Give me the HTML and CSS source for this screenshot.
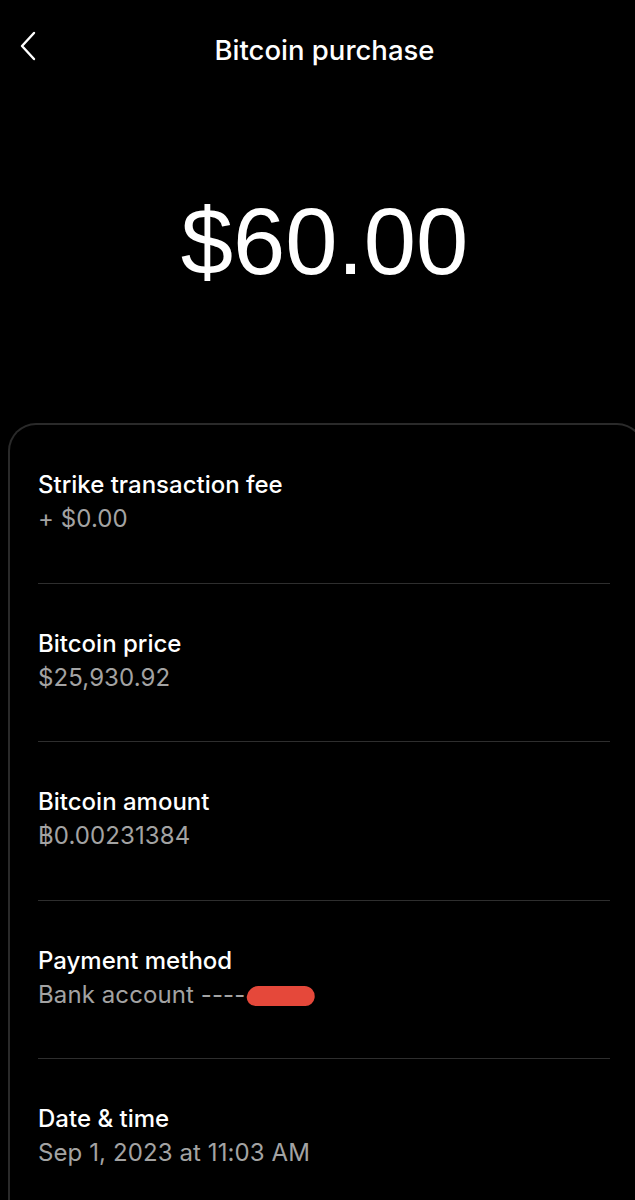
FILE: index.html
```html
<!DOCTYPE html>
<html lang="en-US">
  <head>
    <meta charset="UTF-8">
    <meta name="viewport" content="width=device-width, initial-scale=1">
    <title>Bitcoin purchase</title>
    <link rel="stylesheet" href="styles.css">
  </head>
  <body>
    <div class="screen">
      <!-- Top bar -->
      <header class="topbar">
        <a class="back" href="#" aria-label="Back">
          <svg width="20" height="30" viewBox="0 0 20 30" fill="none">
            <path d="M16 2 L4 15 L16 28" stroke="#fff" stroke-width="2.4" stroke-linecap="round" stroke-linejoin="round"/>
          </svg>
        </a>
        <h1 class="title">Bitcoin purchase</h1>
      </header>

      <div class="amount">$60.00</div>

      <!-- Details card -->
      <section class="card">
        <div class="row">
          <div class="label">Strike transaction fee</div>
          <div class="value">+ $0.00</div>
        </div>
        <div class="row">
          <div class="label">Bitcoin price</div>
          <div class="value">$25,930.92</div>
        </div>
        <div class="row">
          <div class="label">Bitcoin amount</div>
          <div class="value">฿0.00231384</div>
        </div>
        <div class="row">
          <div class="label">Payment method</div>
          <div class="value">Bank account ----<span class="redact"></span></div>
        </div>
        <div class="row">
          <div class="label">Date &amp; time</div>
          <div class="value">Sep 1, 2023 at 11:03 AM</div>
        </div>
      </section>
    </div>
  </body>
</html>
```

FILE: styles.css
```css
/* Page setup */
html, body {
    margin: 0;
    padding: 0;
    background: #000;
    overflow: hidden;
}

body {
    color: #fff;
    font-family: Inter, "Liberation Sans", sans-serif;
}

.screen {
    width: 635px;
    height: 1200px;
    overflow: hidden;
}

/* Header */
.topbar {
    position: relative;
    height: 98px;
    display: flex;
    align-items: center;
    justify-content: center;
}

.back {
    position: absolute;
    left: 18px;
    top: 31px;
    display: block;
    line-height: 0;
}

.title {
    margin: 0;
    padding-left: 14px;
    font-size: 27.5px;
    font-weight: 500;
    letter-spacing: 0;
    transform: translateY(1px);
}

/* Big amount */
.amount {
    text-align: center;
    font-family: "Liberation Sans", Arial, sans-serif;
    font-size: 94px;
    font-weight: 400;
    line-height: 1;
    padding-left: 14px;
    margin-top: 97px;
    height: 228px;
}

/* Card with rows */
.card {
    margin-left: 8px;
    margin-right: -10px;
    border: 2px solid #2a2a2a;
    border-bottom: none;
    border-radius: 28px 28px 0 0;
    padding: 0 30px 0 28px;
}

.row {
    box-sizing: border-box;
    padding-top: 43px;
    height: 158.5px;
    border-bottom: 1.5px solid #2e2e2e;
    width: 572px;
}

.row:last-child {
    border-bottom: none;
}

.label {
    font-size: 24px;
    font-weight: 500;
    line-height: 34px;
    letter-spacing: 0;
}

.value {
    font-size: 24px;
    color: #a3a3a3;
    line-height: 34px;
    letter-spacing: 0.1px;
    display: flex;
    align-items: center;
}

/* Red scribble hiding account digits */
.redact {
    display: inline-block;
    width: 68px;
    height: 20px;
    margin-left: 2px;
    background: #e5483a;
    border-radius: 10px 12px 8px 10px;
    transform: skewX(-8deg) translateY(1px);
}
```
